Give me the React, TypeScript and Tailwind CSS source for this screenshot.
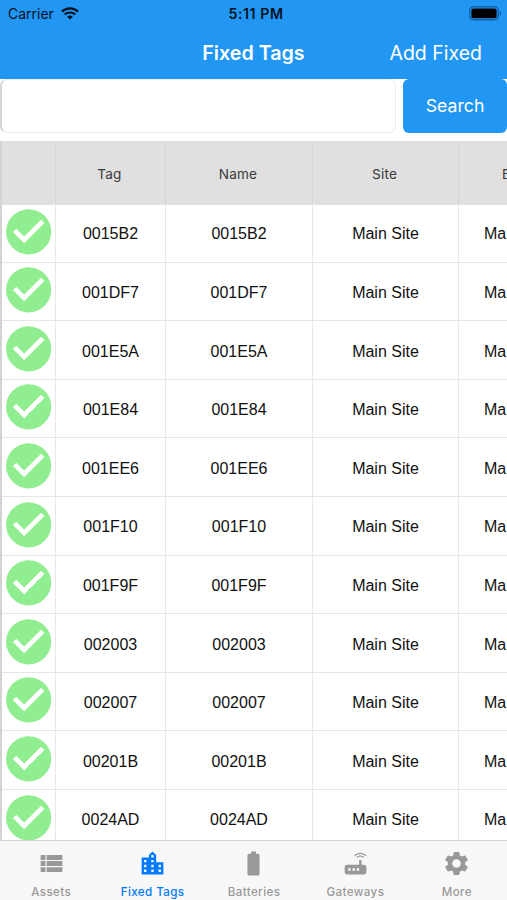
import React from 'react';
import {
  MdBatteryFull,
  MdLocationCity,
  MdRouter,
  MdSettings,
  MdViewList,
} from 'react-icons/md';

const rows = [
  '0015B2',
  '001DF7',
  '001E5A',
  '001E84',
  '001EE6',
  '001F10',
  '001F9F',
  '002003',
  '002007',
  '00201B',
  '0024AD',
];

const tabs = [
  { label: 'Assets', icon: MdViewList },
  { label: 'Fixed Tags', icon: MdLocationCity, active: true },
  { label: 'Batteries', icon: MdBatteryFull },
  { label: 'Gateways', icon: MdRouter },
  { label: 'More', icon: MdSettings },
];

const WifiIcon = () => (
  <svg width="18" height="13" viewBox="0 0 18 13" fill="none" stroke="#04121f">
    <path d="M1 4.6a11.6 11.6 0 0 1 16 0" strokeWidth="2.3" />
    <path d="M3.7 7.6a7.8 7.8 0 0 1 10.6 0" strokeWidth="2.1" />
    <path d="M9 12.6 6.2 9.8a4 4 0 0 1 5.6 0z" fill="#04121f" stroke="none" />
  </svg>
);

const BatteryIcon = () => (
  <svg width="33" height="15" viewBox="0 0 33 15" fill="none">
    <rect x="0.7" y="0.9" width="28.6" height="13" rx="3.6" stroke="#10599a" strokeWidth="1.2" />
    <rect x="2.4" y="2.6" width="25.2" height="9.6" rx="2" fill="#000" />
    <path d="M30.8 5.2c1.6.6 1.6 3.9 0 4.5z" fill="#10599a" />
  </svg>
);

const CheckIcon = () => (
  <svg viewBox="0 0 24 24" className="size-[54px] shrink-0" fill="none">
    <circle cx="11.85" cy="11.9" r="10.05" fill="#90ee90" />
    <path d="M5.6 11.3 9.85 15.5l8.25-8.25" stroke="#fff" strokeWidth="2.1" />
  </svg>
);

const StatusBar = () => (
  <div className="grid h-[27px] grid-cols-3 items-center text-[14.2px] leading-none text-[#04121f]">
    <div className="flex items-center gap-[7px] pl-2">
      <span className="pt-px text-[14px]">Carrier</span>
      <WifiIcon />
    </div>
    <div className="pt-px pl-[5px] text-center font-semibold tracking-[0.55px]">5:11 PM</div>
    <div className="flex justify-end pr-[5px]">
      <BatteryIcon />
    </div>
  </div>
);

const NavBar = () => (
  <div className="grid h-[52px] grid-cols-[1fr_auto_1fr] items-center pt-[2px] text-white">
    <span />
    <h1 className="text-[19.7px] font-semibold">Fixed Tags</h1>
    <button className="justify-self-end pr-[25px] text-[19.5px]">Add Fixed</button>
  </div>
);

const SearchBar = () => (
  <div className="flex h-[62px] shrink-0 gap-[7px] bg-white">
    <input className="h-[54px] w-[396px] rounded-[7px] border border-l-2 border-[#ececec] border-l-[#d6d6d6] bg-white px-3 outline-none" />
    <button className="h-[54px] flex-1 rounded-[6px] bg-[#2196f3] pt-px text-[17.7px] text-white">Search</button>
  </div>
);

const columns = 'grid w-[606px] grid-cols-[54px_110px_147px_146px_147px]';

const TagTable = () => (
  <div className="min-h-0 flex-1 overflow-hidden border-l-2 border-[#d3d3d3]">
    <div className={`${columns} h-16 bg-[#e0e0e0] text-[13.6px] tracking-[0.2px] text-[#3a3a3a]`}>
      {['', 'Tag', 'Name', 'Site'].map((title, index) => (
        <div key={index} className="flex items-center justify-center border-r border-[#d6d6d6] pt-[2px] pr-[2px]">
          {title}
        </div>
      ))}
      <div className="flex items-center pt-[2px] pl-[43px]">Building</div>
    </div>
    <div className="-mt-px font-['Liberation_Sans',Arial,sans-serif] text-[16px] text-[#111]">
      {rows.map((tag) => (
        <div key={tag} className={`${columns} h-[58.6px] border-b border-[#e6e6e6]`}>
          <div className="flex justify-center border-r border-[#e8e8e8] pt-[0.6px]">
            <CheckIcon />
          </div>
          <div className="flex items-center justify-center border-r border-[#e8e8e8] pt-[3.4px]">{tag}</div>
          <div className="flex items-center justify-center border-r border-[#e8e8e8] pt-[3.4px]">{tag}</div>
          <div className="flex items-center justify-center border-r border-[#e8e8e8] pt-[3.4px]">Main Site</div>
          <div className="flex items-center pt-[3.4px] pl-[25px]">Main Building</div>
        </div>
      ))}
    </div>
  </div>
);

const TabBar = () => (
  <nav className="grid h-[60px] shrink-0 grid-cols-5 border-t border-[#d4d4d4] bg-[#f8f8f8]">
    {tabs.map(({ label, icon: Icon, active }) => (
      <div
        key={label}
        className={`flex flex-col items-center pt-[8px] ${active ? 'text-[#007aff]' : 'text-[#999]'}`}
      >
        <Icon size={29} className="ml-px" />
        <span className="mt-[7px] pl-px text-[11.6px] leading-[14px] font-medium tracking-[0.4px]">{label}</span>
      </div>
    ))}
  </nav>
);

export default function App() {
  return (
    <div className="flex h-[900px] w-[507px] flex-col overflow-hidden bg-white font-[Inter,'Liberation_Sans',sans-serif]">
      <header className="shrink-0 bg-[#2196f3]">
        <StatusBar />
        <NavBar />
      </header>
      <SearchBar />
      <TagTable />
      <TabBar />
    </div>
  );
}
